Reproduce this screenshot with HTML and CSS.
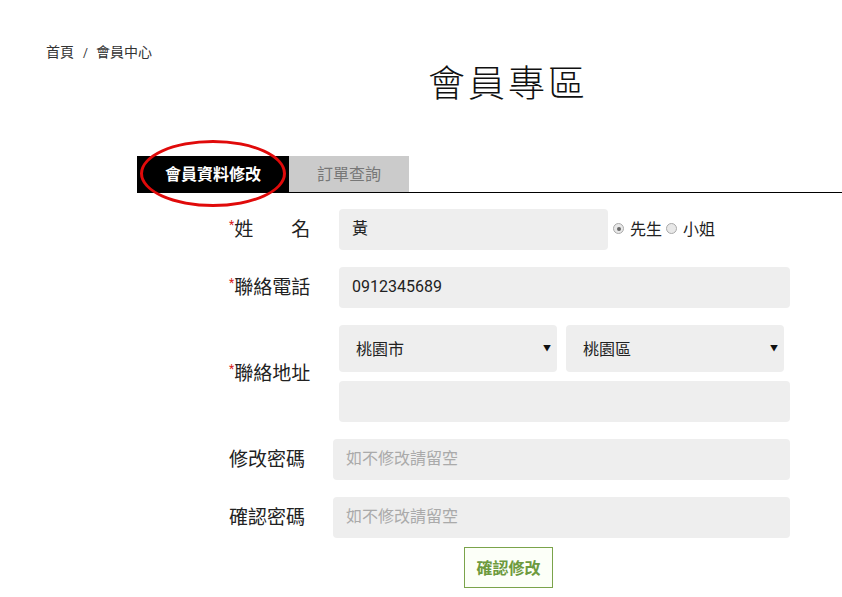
FILE: index.html
```html
<!DOCTYPE html>
<html lang="zh-Hant">
<head>
<meta charset="utf-8">
<title>會員專區</title>
<link rel="stylesheet" href="styles.css">
</head>
<body>
<div class="breadcrumb">首頁<span class="sep">/</span>會員中心</div>
<h1 class="title">會員專區</h1>
<div class="tabs">
  <div class="tab active">會員資料修改</div>
  <div class="tab">訂單查詢</div>
  <div class="circle"></div>
</div>
<form class="form">
  <div class="row">
    <div class="label w110"><span class="req">*</span>姓　　名</div>
    <div class="field name">黃</div>
    <div class="radios">
      <span class="radio checked"></span><span class="rtext">先生</span>
      <span class="radio"></span><span class="rtext">小姐</span>
    </div>
  </div>
  <div class="row">
    <div class="label w110"><span class="req">*</span>聯絡電話</div>
    <div class="field wide">0912345689</div>
  </div>
  <div class="row">
    <div class="label w110"><span class="req">*</span>聯絡地址</div>
    <div class="addr">
      <div class="selects">
        <div class="select">桃園市<span class="arrow">▼</span></div>
        <div class="select">桃園區<span class="arrow">▼</span></div>
      </div>
      <div class="field wide"></div>
    </div>
  </div>
  <div class="row">
    <div class="label w104">修改密碼</div>
    <div class="field pw placeholder">如不修改請留空</div>
  </div>
  <div class="row">
    <div class="label w104">確認密碼</div>
    <div class="field pw placeholder">如不修改請留空</div>
  </div>
  <div class="btnrow"><div class="btn">確認修改</div></div>
</form>
</body>
</html>
```
FILE: styles.css
```css
body {
  margin: 0;
  background: #fff;
  color: #222;
  font-family: Roboto, "Noto Sans CJK TC", sans-serif;
}
.breadcrumb {
  padding: 45px 0 0 46px;
  height: 14px;
  font-size: 14px;
  line-height: 14px;
  color: #333;
}
.breadcrumb .sep {
  margin: 0 8px 0 9px;
  font-size: 12px;
  line-height: 12px;
}
.title {
  margin: 7px 0 0;
  padding-left: 174px;
  text-align: center;
  font-size: 37px;
  line-height: 37px;
  font-weight: 300;
  letter-spacing: 3px;
  color: #111;
}
.tabs {
  position: relative;
  display: flex;
  margin: 53px 0 0 137px;
  border-bottom: 1px solid #000;
}
.tab {
  height: 36px;
  line-height: 38px;
  font-size: 16px;
  text-align: center;
  background: #cbcbcb;
  color: #777;
  width: 120px;
  overflow: hidden;
}
.tab.active {
  width: 152px;
  background: #000;
  color: #fff;
  font-weight: bold;
}
.circle {
  position: absolute;
  left: 3px;
  top: -16px;
  width: 140px;
  height: 61px;
  border: 3px solid #e00a0a;
  border-radius: 50%;
}
.form {
  margin: 16px 0 0 229px;
  width: 561px;
}
.row {
  display: flex;
  align-items: center;
  margin-bottom: 17px;
}
.label {
  font-size: 19px;
  color: #222;
  flex: none;
  padding-bottom: 4px;
}
.w110 { width: 110px; }
.w104 { width: 104px; }
.req {
  color: #d82020;
  font-size: 12px;
  vertical-align: 7px;
}
.field {
  box-sizing: border-box;
  height: 41px;
  line-height: 40px;
  background: #eee;
  border-radius: 4px;
  padding-left: 13px;
  font-size: 16px;
  color: #222;
}
.name { width: 269px; }
.wide { width: 451px; }
.pw { width: 457px; }
.placeholder { color: #aaa; }
.radios {
  display: flex;
  align-items: center;
  margin-left: 5px;
  font-size: 16px;
  padding-bottom: 4px;
}
.radio {
  box-sizing: border-box;
  width: 11px;
  height: 11px;
  border: 1px solid #aaa;
  border-radius: 50%;
  background: #e8e8e8;
  position: relative;
  margin-top: 2px;
}
.radio.checked::after {
  content: "";
  position: absolute;
  left: 2.5px;
  top: 2.5px;
  width: 4px;
  height: 4px;
  border-radius: 50%;
  background: #666;
}
.rtext { margin: 0 4px 0 6px; }
.addr {
  display: flex;
  flex-direction: column;
  gap: 9px;
}
.selects {
  display: flex;
  gap: 9px;
}
.select {
  box-sizing: border-box;
  display: flex;
  justify-content: space-between;
  align-items: center;
  width: 218px;
  height: 47px;
  padding: 0 6px 2px 17px;
  background: #eee;
  border-radius: 4px;
  font-size: 16px;
}
.arrow {
  font-size: 8px;
  color: #111;
}
.btnrow {
  display: flex;
  margin: -8px 0 0 235px;
}
.btn {
  box-sizing: border-box;
  width: 89px;
  height: 41px;
  line-height: 41px;
  text-align: center;
  border: 1px solid #7aa34a;
  color: #6d9a3e;
  font-weight: bold;
  font-size: 16px;
  background: #fcfff8;
  overflow: hidden;
}
```
